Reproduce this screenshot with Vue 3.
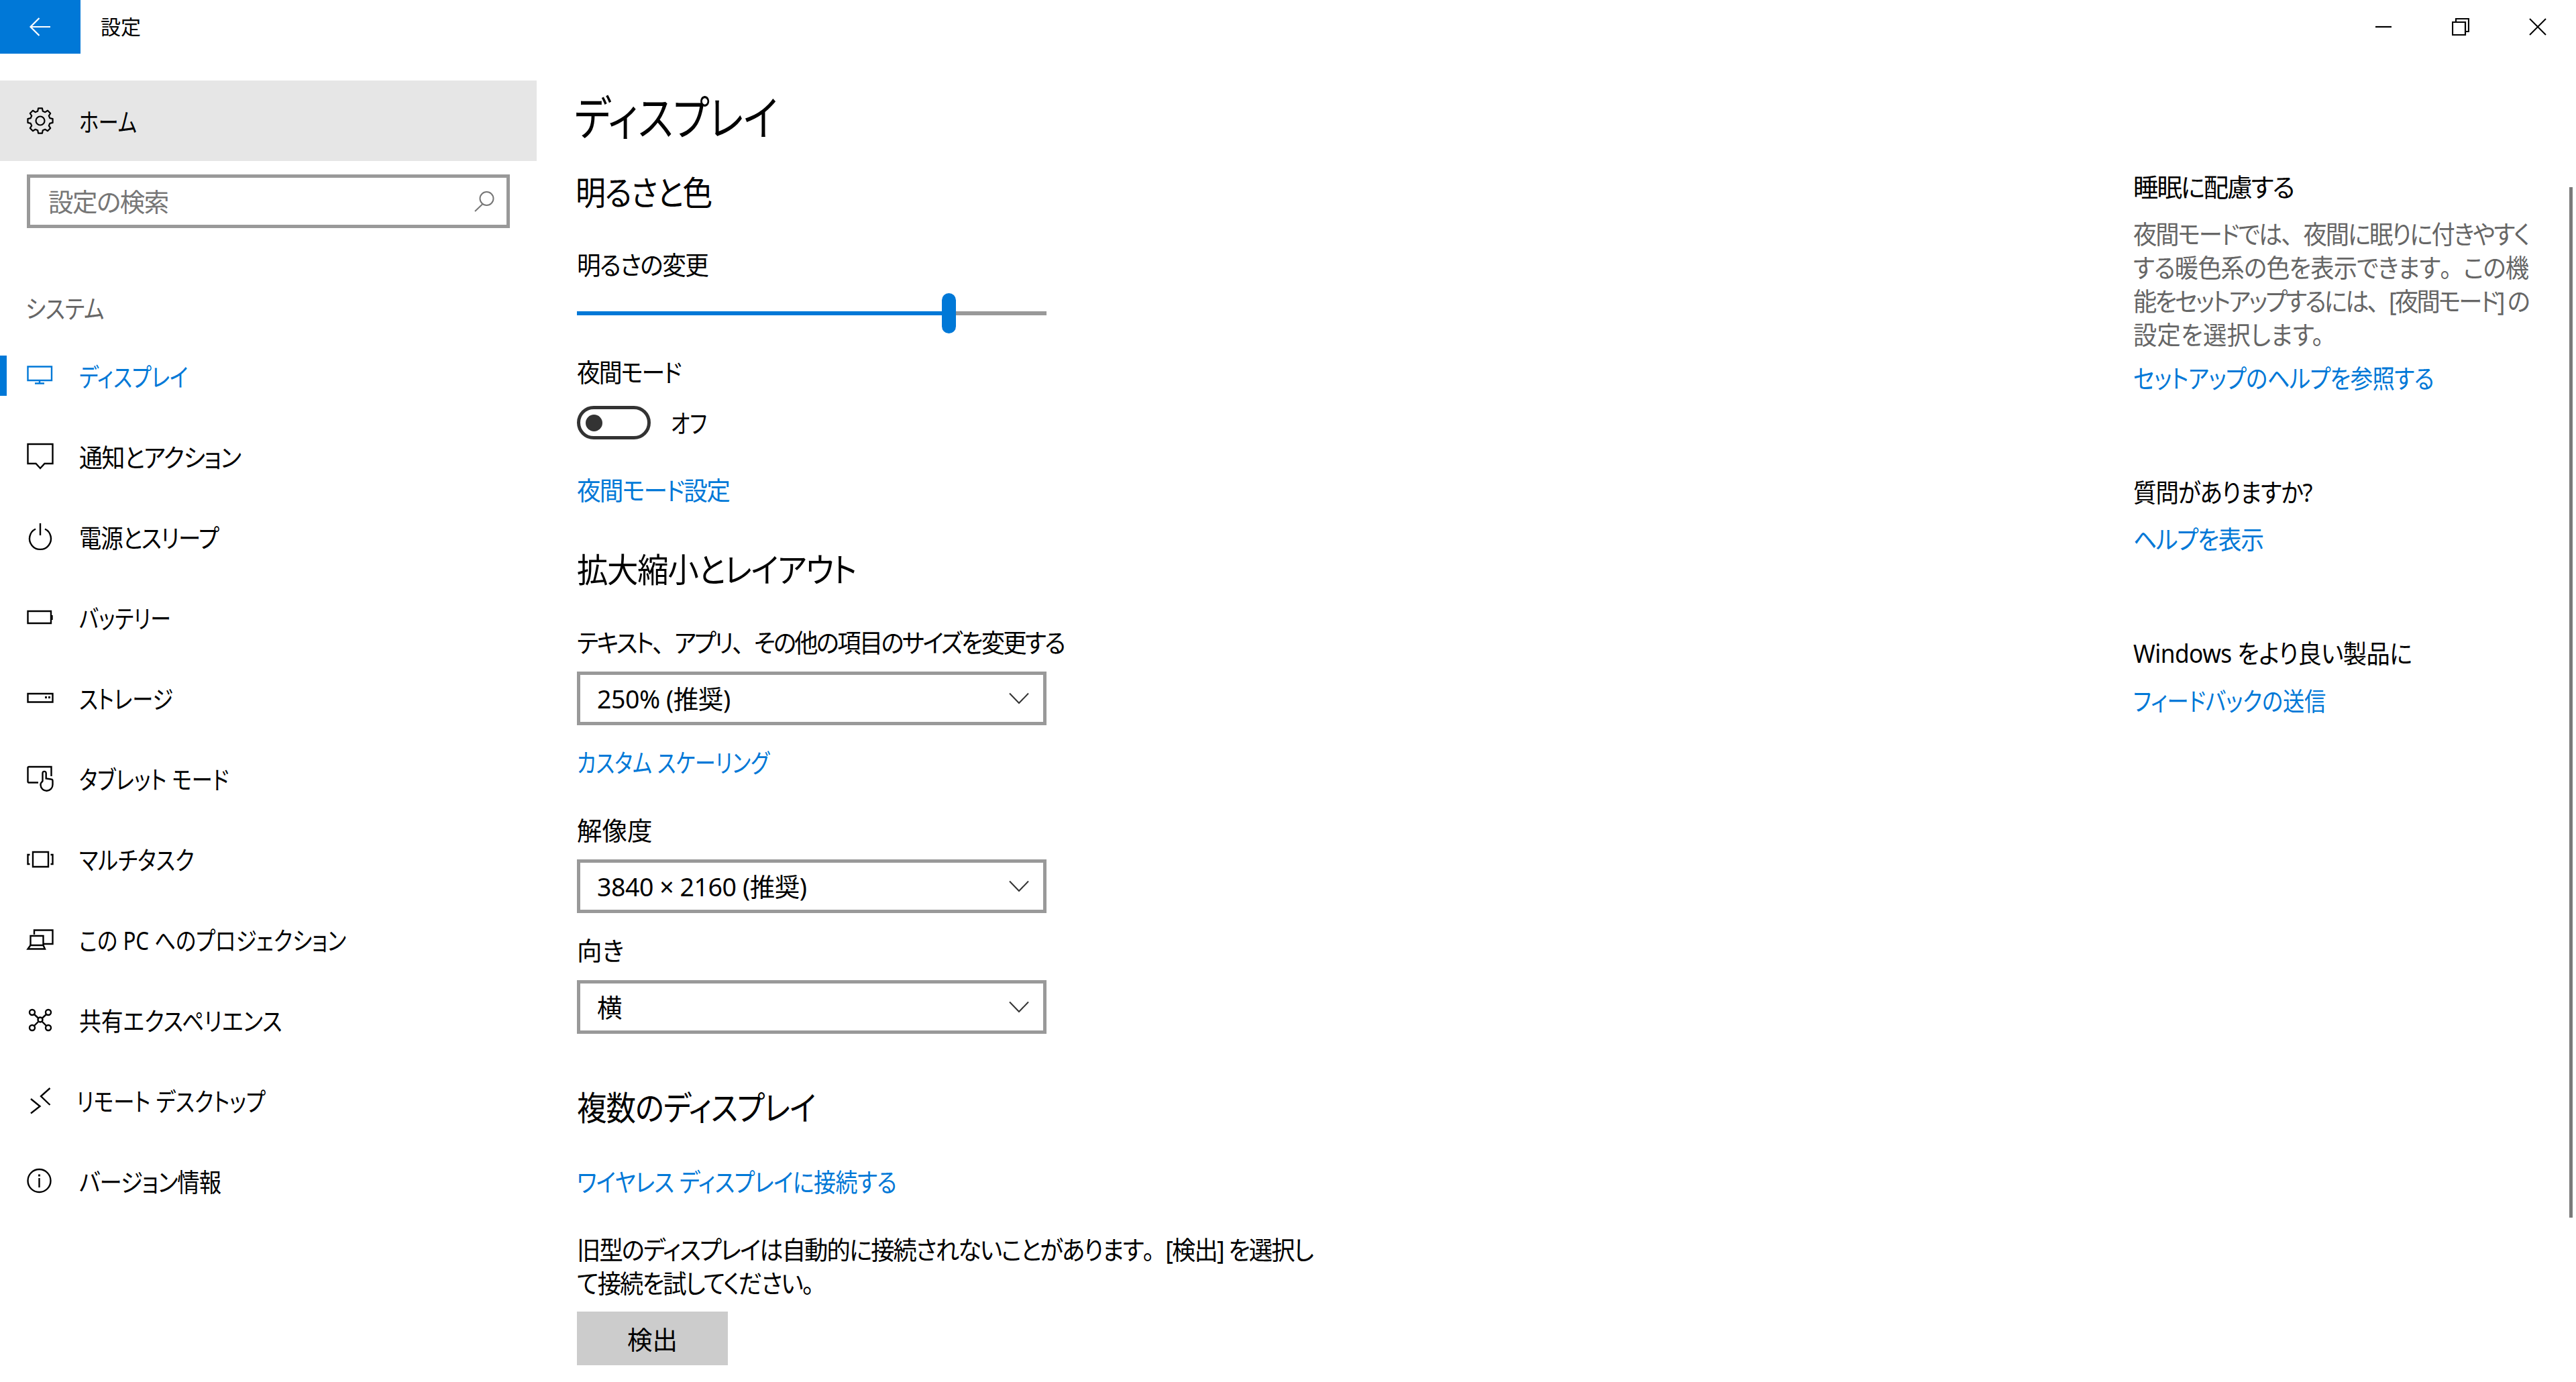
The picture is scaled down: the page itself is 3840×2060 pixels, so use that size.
<script setup>
const gearPoints = []
for (let i = 0; i < 8; i++) {
  const a = i * 45 - 90
  const pts = [[a - 15, 14.8], [a - 9, 18.8], [a + 9, 18.8], [a + 15, 14.8]]
  for (const [deg, r] of pts) {
    const t = (deg * Math.PI) / 180
    gearPoints.push(`${(20 + r * Math.cos(t)).toFixed(2)},${(20 + r * Math.sin(t)).toFixed(2)}`)
  }
}
const gear = gearPoints.join(' ')

const navItems = [
  { label: 'ディスプレイ', s: 0.83, ls: 0, active: true, icon: '<path d="M1.5 6.5H37V27H1.5Z"/><path d="M19 27V31.5M12 31.5H26"/>' },
  { label: '通知とアクション', s: 0.93, ls: -1.5, icon: '<path d="M1.5 2H38.5V31H26.5L20 38L13.5 31H1.5Z"/>' },
  { label: '電源とスリープ', s: 0.89, ls: -1.2, icon: '<path d="M13 8.5A16 16 0 1 0 27 8.5"/><path d="M20 0V18"/>' },
  { label: 'バッテリー', s: 0.82, ls: 0, icon: '<path d="M1.5 11H36V29H1.5Z"/><path d="M37.5 17V24"/>' },
  { label: 'ストレージ', s: 0.83, ls: 0, icon: '<path d="M1.5 14H38.5V26.5H1.5Z"/><rect x="27" y="18" width="3" height="3" fill="currentColor" stroke="none"/><rect x="32" y="18" width="3" height="3" fill="currentColor" stroke="none"/>' },
  { label: 'タブレット モード', s: 0.83, ls: 0, icon: '<path d="M17 26.5H2.5A1.5 1.5 0 0 1 1.5 25V4A1.5 1.5 0 0 1 3 3H36.5V17"/><path d="M23.5 25V12.5a2.6 2.6 0 0 1 5.2 0V20.5L36 21.5a2.5 2.5 0 0 1 2.5 2.5V29.5a9 9 0 0 1-18 0.5c0-2 1-4 3-5.5"/>' },
  { label: 'マルチタスク', s: 0.845, ls: 0, icon: '<path d="M9 10H32V32H9Z"/><path d="M4.5 14H1.5V28H4.5M35.5 14H38.5V28H35.5"/>' },
  { label: 'この PC へのプロジェクション', s: 0.835, ls: 0, icon: '<path d="M11 13V6.5H38.5V27H25"/><path d="M5.5 29V15H24.5V29"/><path d="M5.5 29H24.5L27 34.5H1.5Z"/>' },
  { label: '共有エクスペリエンス', s: 0.875, ls: 0, icon: '<circle cx="20" cy="20" r="3.5"/><circle cx="8" cy="9" r="4"/><circle cx="32" cy="9" r="4"/><circle cx="8" cy="32" r="4"/><circle cx="32" cy="32" r="4"/><path d="M11 12L17.5 18M29 12L22.5 18M11 29L17.5 22.5M29 29L22.5 22.5"/>' },
  { label: 'リモート デスクトップ', s: 0.835, ls: 0, tight: true, icon: '<path d="M34.5 2L21 14L34.5 27"/><path d="M6 18L19.5 29L6 39.5"/>' },
  { label: 'バージョン情報', s: 0.89, ls: -1, icon: '<circle cx="18.5" cy="20" r="17"/><path d="M18.5 16V30"/><rect x="17" y="10.5" width="3" height="3" fill="currentColor" stroke="none"/>' }
]
</script>

<template>
  <div class="window">
    <header class="titlebar">
      <div class="back">
        <svg width="40" height="40" viewBox="0 0 40 40" fill="none" stroke="#fff" stroke-width="2.2">
          <path d="M35 20H6M18.5 7L5.5 20L18.5 33" />
        </svg>
      </div>
      <div class="app-title">設定</div>
      <div class="controls">
        <div class="ctrl">
          <svg width="26" height="26" viewBox="0 0 26 26" fill="none" stroke="#000" stroke-width="2.2"><path d="M1 13H25" /></svg>
        </div>
        <div class="ctrl">
          <svg width="26" height="26" viewBox="0 0 26 26" fill="none" stroke="#000" stroke-width="2.2"><path d="M1 6H20V25H1Z" /><path d="M6 6V1H25V20H20" /></svg>
        </div>
        <div class="ctrl">
          <svg width="26" height="26" viewBox="0 0 26 26" fill="none" stroke="#000" stroke-width="2"><path d="M1 1L25 25M25 1L1 25" /></svg>
        </div>
      </div>
    </header>

    <div class="body">
      <nav class="sidebar">
        <div class="home">
          <svg class="icon" width="40" height="40" viewBox="0 0 40 40" fill="none" stroke="#000" stroke-width="2.2" stroke-linejoin="round">
            <polygon :points="gear" />
            <circle cx="20" cy="20" r="6.5" />
          </svg>
          <span class="nav-text home-text">ホーム</span>
        </div>
        <div class="search">
          <span class="search-text">設定の検索</span>
          <svg width="32" height="32" viewBox="0 0 32 32" fill="none" stroke="#767676" stroke-width="2">
            <circle cx="20.5" cy="12" r="10" />
            <path d="M14 20.5L3 31" />
          </svg>
        </div>
        <div class="section">システム</div>
        <div v-for="item in navItems" :key="item.label" class="nav-row" :class="{ active: item.active }">
          <svg class="icon" width="40" height="40" viewBox="0 0 40 40" fill="none" stroke="currentColor" stroke-width="2.4" v-html="item.icon"></svg>
          <span class="nav-text" :class="{ tight: item.tight }" :style="{ letterSpacing: item.ls + 'px', transform: 'scaleX(' + item.s + ')' }">{{ item.label }}</span>
        </div>
      </nav>

      <main class="content">
        <h1 class="title">ディスプレイ</h1>
        <h2 class="heading first">明るさと色</h2>
        <div class="label brightness-label">明るさの変更</div>
        <div class="slider">
          <div class="track-on"></div>
          <div class="thumb"></div>
          <div class="track-off"></div>
        </div>
        <div class="label night-label">夜間モード</div>
        <div class="toggle-row">
          <div class="toggle"><div class="dot"></div></div>
          <span class="toggle-text">オフ</span>
        </div>
        <div class="label link night-link">夜間モード設定</div>

        <h2 class="heading scale">拡大縮小とレイアウト</h2>
        <div class="label size-label">テキスト<span class="fw">、</span>アプリ<span class="fw">、</span>その他の項目のサイズを変更する</div>
        <div class="select select-a">
          <span class="value">250% (推奨)</span>
          <svg width="30" height="18" viewBox="0 0 30 18" fill="none" stroke="#333" stroke-width="2"><path d="M1 1.5L15 16L29 1.5" /></svg>
        </div>
        <div class="label link custom-link">カスタム スケーリング</div>
        <div class="label res-label">解像度</div>
        <div class="select select-a">
          <span class="value">3840 × 2160 (推奨)</span>
          <svg width="30" height="18" viewBox="0 0 30 18" fill="none" stroke="#333" stroke-width="2"><path d="M1 1.5L15 16L29 1.5" /></svg>
        </div>
        <div class="label orient-label">向き</div>
        <div class="select select-c">
          <span class="value">横</span>
          <svg width="30" height="18" viewBox="0 0 30 18" fill="none" stroke="#333" stroke-width="2"><path d="M1 1.5L15 16L29 1.5" /></svg>
        </div>

        <h2 class="heading multi">複数のディスプレイ</h2>
        <div class="label link wireless">ワイヤレス ディスプレイに接続する</div>
        <p class="label note">旧型のディスプレイは自動的に接続されないことがあります<span class="fw">。</span>[検出] を選択し<br /><span class="note-2">て接続を試してください。</span></p>
        <div class="detect">検出</div>
      </main>

      <aside class="aside">
        <div class="label aside-a">睡眠に配慮する</div>
        <p class="label aside-p">
          <span class="pl1">夜間モードでは<span class="fw">、</span>夜間に眠りに付きやすく</span><br />
          <span class="pl2">する暖色系の色を表示できます<span class="fw">。</span>この機</span><br />
          <span class="pl3">能をセットアップするには<span class="fw">、</span>[夜間モード] の</span><br />
          <span class="pl4">設定を選択します。</span>
        </p>
        <div class="label link aside-l1">セットアップのヘルプを参照する</div>
        <div class="label aside-b aside-q">質問がありますか?</div>
        <div class="label link aside-l2">ヘルプを表示</div>
        <div class="label aside-b aside-w">Windows をより良い製品に</div>
        <div class="label link aside-l3">フィードバックの送信</div>
      </aside>
    </div>

    <div class="scrollbar"></div>
  </div>
</template>

<style scoped>
.window {
  position: relative;
  width: 3840px;
  height: 2060px;
  overflow: hidden;
  background: #fff;
  color: #000;
  font-family: "Noto Sans", "Noto Sans CJK JP", sans-serif;
  font-feature-settings: "palt";
  font-weight: 400;
}
.fw {
  font-feature-settings: normal;
}
.titlebar {
  display: flex;
  align-items: center;
  height: 80px;
}
.back {
  display: flex;
  align-items: center;
  justify-content: center;
  width: 120px;
  height: 80px;
  background: #0078d7;
}
.app-title {
  margin-left: 30px;
  font-size: 30px;
  line-height: 80px;
}
.controls {
  display: flex;
  margin-left: auto;
}
.ctrl {
  display: flex;
  align-items: center;
  justify-content: center;
  width: 115px;
  height: 80px;
}
.body {
  display: flex;
  height: 1980px;
}
.sidebar {
  flex: none;
  width: 800px;
  padding-top: 40px;
  box-sizing: border-box;
}
.home {
  display: flex;
  align-items: center;
  height: 120px;
  padding-left: 40px;
  background: #e6e6e6;
}
.icon {
  flex: none;
  overflow: visible;
}
.nav-text {
  margin-left: 38px;
  padding-top: 4px;
  font-size: 37.5px;
  line-height: 50px;
  white-space: nowrap;
  transform-origin: left center;
}
.nav-text.tight {
  margin-left: 34px;
}
.home-text {
  transform: scaleX(0.8);
}
.search {
  display: flex;
  align-items: center;
  justify-content: space-between;
  box-sizing: border-box;
  width: 720px;
  height: 80px;
  margin: 20px 0 0 40px;
  padding: 0 18px 0 27px;
  border: 5px solid #999;
}
.search-text {
  padding-bottom: 4px;
  color: #767676;
  font-size: 37.5px;
  letter-spacing: -1.5px;
}
.section {
  margin: 95px 0 0 38px;
  height: 50px;
  color: #666;
  font-size: 37.5px;
  line-height: 50px;
  transform: scaleX(0.86);
  transform-origin: left center;
}
.nav-row {
  position: relative;
  display: flex;
  align-items: center;
  height: 120px;
  padding-left: 40px;
}
.nav-row:nth-of-type(4) {
  margin-top: 15px;
}
.nav-row.active {
  color: #0078d7;
}
.nav-row.active::before {
  content: "";
  position: absolute;
  left: 0;
  top: 30px;
  width: 10px;
  height: 60px;
  background: #0078d7;
}
.content {
  flex: none;
  width: 2380px;
  padding-left: 60px;
  box-sizing: border-box;
}
.title {
  margin: 50px 0 0 -4px;
  font-size: 70px;
  font-weight: 400;
  line-height: 90px;
  transform: scaleX(0.83);
  transform-origin: left center;
}
.heading {
  margin: 0;
  font-size: 50px;
  font-weight: 400;
  line-height: 60px;
  transform-origin: left center;
}
.label {
  margin: 0;
  font-size: 37.5px;
  line-height: 50px;
  white-space: nowrap;
  transform-origin: left center;
}
.link {
  color: #0078d7;
}
.first { margin-top: 37px; margin-left: -2px; letter-spacing: -1.6px; transform: scaleX(0.9); }
.brightness-label { margin-top: 53px; letter-spacing: -1.7px; transform: scaleX(0.95); }
.slider {
  display: flex;
  align-items: center;
  width: 700px;
  height: 60px;
  margin-top: 17px;
}
.track-on {
  width: 544px;
  height: 6px;
  background: #0078d7;
}
.thumb {
  flex: none;
  width: 21px;
  height: 60px;
  border-radius: 11px;
  background: #0078d7;
}
.track-off {
  flex: 1;
  height: 6px;
  background: #999;
}
.night-label { margin-top: 33px; letter-spacing: -2.2px; transform: scaleX(0.93); }
.toggle-row {
  display: flex;
  align-items: center;
  height: 50px;
  margin-top: 25px;
}
.toggle {
  display: flex;
  align-items: center;
  box-sizing: border-box;
  width: 110px;
  height: 50px;
  padding-left: 8px;
  border: 5px solid #333;
  border-radius: 25px;
}
.dot {
  width: 25px;
  height: 25px;
  border-radius: 50%;
  background: #333;
}
.toggle-text {
  margin-left: 30px;
  padding-bottom: 4px;
  font-size: 37.5px;
  transform: scaleX(0.82);
  transform-origin: left center;
}
.night-link { margin-top: 51px; letter-spacing: -1.9px; transform: scaleX(0.95); }
.scale { margin-top: 63px; letter-spacing: -1.5px; transform: scaleX(0.93); }
.size-label { margin-top: 54px; letter-spacing: -2.8px; transform: scaleX(0.94); }
.select {
  display: flex;
  align-items: center;
  justify-content: space-between;
  box-sizing: border-box;
  width: 700px;
  height: 80px;
  padding: 0 21px 0 25px;
  border: 5px solid #999;
  font-size: 37.5px;
}
.value {
  padding-bottom: 4px;
  letter-spacing: -0.45px;
}
.select-a { margin-top: 18px; }
.custom-link { margin-top: 31px; transform: scaleX(0.82); }
.res-label { margin-top: 51px; }
.orient-label { margin-top: 31px; }
.select-c { margin-top: 19px; }
.multi { margin-top: 80px; letter-spacing: -1.1px; transform: scaleX(0.89); }
.wireless { margin-top: 56px; letter-spacing: -0.6px; transform: scaleX(0.88); }
.note { margin-top: 51px; letter-spacing: -1.92px; transform: scaleX(0.94); }
.note-2 { letter-spacing: -1.9px; }
.detect {
  width: 225px;
  height: 80px;
  margin-top: 17px;
  background: #ccc;
  font-size: 37.5px;
  line-height: 84px;
  text-align: center;
}
.aside {
  flex: none;
  width: 600px;
}
.aside-a { margin-top: 174px; letter-spacing: -2.1px; }
.aside-p {
  margin-top: 20px;
  color: #666;
  transform: scaleX(0.94);
}
.pl1 { letter-spacing: -2.15px; }
.pl2 { letter-spacing: -0.9px; }
.pl3 { letter-spacing: -2.95px; }
.pl4 { letter-spacing: 0.3px; }
.aside-l1 { margin-top: 15px; letter-spacing: -0.7px; transform: scaleX(0.89); }
.aside-b { margin-top: 120px; }
.aside-q { letter-spacing: -1.2px; transform: scaleX(0.92); }
.aside-w { letter-spacing: -0.6px; transform: scaleX(0.94); }
.aside-l2 { margin-top: 20px; letter-spacing: -1.5px; transform: scaleX(0.93); }
.aside-l3 { margin-top: 21px; letter-spacing: -0.2px; transform: scaleX(0.86); }
.scrollbar {
  position: absolute;
  top: 279px;
  right: 5px;
  width: 5px;
  height: 1536px;
  background: #7a7a7a;
}
</style>

<style>
html, body {
  margin: 0;
  background: #fff;
}
</style>
